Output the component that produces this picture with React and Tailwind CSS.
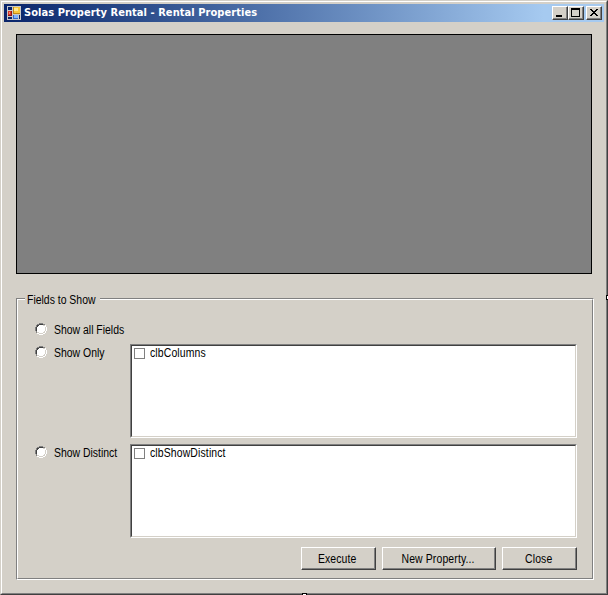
import React from "react";
import clsx from "clsx";

const uiFont = "font-['Liberation_Sans',Arial,sans-serif] text-[12px] leading-[13px]";

const AppIcon = () => (
  <svg width="16" height="16" viewBox="0 0 16 16" shapeRendering="crispEdges" className="ml-[3px] mr-[1px] shrink-0">
    <rect x="0" y="1" width="14" height="14" fill="#c8c8c8" />
    <rect x="1" y="2" width="4" height="3" fill="#0a246a" />
    <rect x="1" y="6" width="4" height="5" fill="#8c1414" />
    <rect x="1" y="6" width="3" height="4" fill="#d83828" />
    <rect x="2" y="7" width="1" height="2" fill="#f08878" />
    <rect x="6" y="2" width="7" height="7" fill="#c08818" />
    <rect x="7" y="2" width="6" height="6" fill="#f8c83c" />
    <rect x="7" y="3" width="4" height="3" fill="#ffe890" />
    <rect x="6" y="10" width="5" height="4" fill="#3468c8" />
    <rect x="7" y="10" width="4" height="3" fill="#80b4ff" />
    <rect x="1" y="12" width="4" height="2" fill="#0a246a" />
    <rect x="12" y="10" width="1" height="4" fill="#0a246a" />
  </svg>
);

const CaptionButton = ({ className, children }) => (
  <button
    className={clsx(
      "h-[14px] w-4 border border-t-white border-l-white border-r-[#404040] border-b-[#404040] bg-[#d4d0c8] shadow-[inset_-1px_-1px_0_#808080]",
      className
    )}
  >
    <svg width="14" height="12" viewBox="0 0 14 12" shapeRendering="crispEdges" className="block">
      {children}
    </svg>
  </button>
);

const TitleBar = () => (
  <div className="flex h-[18px] items-center bg-linear-to-r from-[#0a246a] to-[#a6caf0] to-90%">
    <AppIcon />
    <span className="whitespace-nowrap font-['DejaVu_Sans_Condensed','DejaVu_Sans',sans-serif] text-[11px] font-bold leading-[18px] tracking-[0.06px] text-white">
      Solas Property Rental - Rental Properties
    </span>
    <div className="ml-auto mr-[2px] flex">
      <CaptionButton>
        <rect x="3" y="8" width="6" height="2" />
      </CaptionButton>
      <CaptionButton>
        <path d="M2 1h9v9h-9zM3 3v6h7v-6z" fillRule="evenodd" />
      </CaptionButton>
      <CaptionButton className="ml-[2px]">
        <path d="M3 2h2v1h1v1h2v-1h1v-1h2v1h-1v1h-1v1h-1v1h1v1h1v1h1v1h-2v-1h-1v-1h-2v1h-1v1h-2v-1h1v-1h1v-1h1v-1h-1v-1h-1v-1h-1z" />
      </CaptionButton>
    </div>
  </div>
);

// narrow dialog lettering
const Label = ({ className = "origin-left", children }) => (
  <span className={clsx("inline-block scale-x-[0.87] whitespace-nowrap", className)}>{children}</span>
);

const Radio = ({ label }) => (
  <label className="flex h-[14px] items-start">
    <svg width="12" height="12" viewBox="0 0 12 12" shapeRendering="crispEdges" className="mr-[7px] shrink-0">
      <path d="M4 1h4v1h2v2h1v4h-1v2h-2v1h-4v-1h-2v-2h-1v-4h1v-2h2z" fill="#fff" />
      <path d="M4 0h4v1h2v1h-2v-1h-4v1h-2v2h-1v4h1v2h-1v-2h-1v-4h1v-2h1v-1h2z" fill="#808080" />
      <path d="M4 1h4v1h-4zM2 2h2v1h-1v1h-1zM1 4h1v4h-1z" fill="#404040" />
      <path d="M8 2h2v1h-2zM10 4h1v4h-1zM9 8h1v1h-1zM8 9h2v1h-2zM4 10h4v1h-4zM2 9h2v1h-2z" fill="#d4d0c8" />
      <path d="M10 2h1v2h1v4h-1v2h-1v1h-2v1h-4v-1h-2v-1h2v1h4v-1h2v-2h1v-4h-1z" fill="#fff" />
    </svg>
    <Label className="mt-px origin-left">{label}</Label>
  </label>
);

const CheckedList = ({ name }) => (
  <div className="h-[94px] w-[447px] border border-t-[#808080] border-l-[#808080] border-r-white border-b-white">
    <div className="h-full border border-t-[#404040] border-l-[#404040] border-r-[#d4d0c8] border-b-[#d4d0c8] bg-white">
      <div className="flex items-start pl-[2px] pt-px">
        <span className="mr-[5px] mt-px size-[11px] shrink-0 border border-[#808080] bg-white" />
        <Label className="origin-left tracking-[0.15px]">{name}</Label>
      </div>
    </div>
  </div>
);

const PushButton = ({ className, children }) => (
  <button
    className={clsx(
      "flex h-[23px] items-center justify-center border border-t-white border-l-white border-r-[#404040] border-b-[#404040] bg-[#d4d0c8] pr-[2px] pt-px shadow-[inset_-1px_-1px_0_#808080]",
      className
    )}
  >
    <Label className="origin-center tracking-[0.15px]">{children}</Label>
  </button>
);

const App = () => (
  <div className={clsx("relative h-[595px] w-[608px] overflow-hidden bg-[#d4d0c8] text-black", uiFont)}>
    <div className="h-full border border-t-[#d4d0c8] border-l-[#d4d0c8] border-r-[#404040] border-b-[#404040]">
      <div className="h-full border border-t-white border-l-white border-r-[#808080] border-b-[#808080] px-[2px] pt-[2px]">
        <TitleBar />

        <div className="ml-3 mt-3 h-[240px] w-[576px] border border-black bg-[#808080]" />

        <fieldset className="relative ml-3 mt-6 h-[282px] w-[578px] border border-t-[#808080] border-l-[#808080] border-r-white border-b-white">
          <div className="h-full border border-t-white border-l-white border-r-[#808080] border-b-[#808080] pl-[17px] pt-[23px]">
            <Radio label="Show all Fields" />
            <div className="mt-[7px] flex">
              <div className="w-[95px] pt-[2px]">
                <Radio label="Show Only" />
              </div>
              <CheckedList name="clbColumns" />
            </div>
            <div className="mt-[6px] flex">
              <div className="w-[95px] pt-[2px]">
                <Radio label="Show Distinct" />
              </div>
              <CheckedList name="clbShowDistinct" />
            </div>
            <div className="mr-[15px] mt-[9px] flex justify-end gap-[6px]">
              <PushButton className="w-[75px]">Execute</PushButton>
              <PushButton className="w-[114px]">New Property...</PushButton>
              <PushButton className="w-[75px]">Close</PushButton>
            </div>
          </div>
          {/* caption sits over the etched line */}
          <span className="absolute -top-[5px] left-2 w-[75px] bg-[#d4d0c8] pl-[2px]">
            <Label>Fields to Show</Label>
          </span>
        </fieldset>
      </div>
    </div>

    {/* resize handles */}
    <span className="absolute left-[302px] top-[593px] h-[5px] w-[5px] border border-black bg-white" />
    <span className="absolute left-[606px] top-[295px] h-[5px] w-[5px] border border-black bg-white" />
  </div>
);

export default App;
